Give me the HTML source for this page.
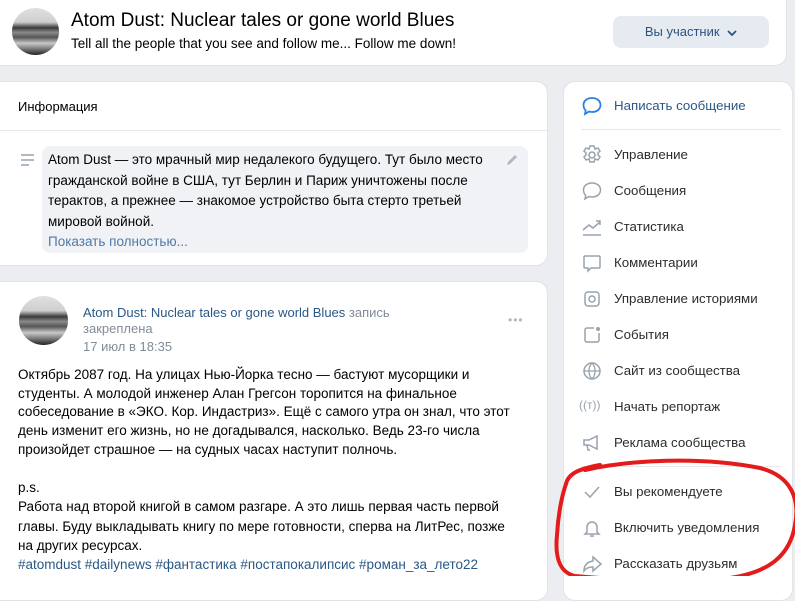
<!DOCTYPE html>
<html><head><meta charset="utf-8"><style>
*{margin:0;padding:0;box-sizing:border-box}
body{width:795px;height:576px;overflow:hidden;background:#ebedf0;font-family:"Liberation Sans","Noto Sans CJK SC",sans-serif;color:#000;position:relative}
.card{position:absolute;background:#fff;border:1px solid #e1e3e6;border-radius:12px}
.av{position:absolute;border-radius:50%;background:linear-gradient(180deg,#e0e0e0 0,#cfcfcf 30%,#3a3a3a 42%,#8a8a8a 52%,#555 62%,#c8c8c8 75%,#222 100%)}
.nowrap{white-space:nowrap}
.mi{position:absolute;left:50px;font-size:13.3px;color:#2c2d2e;white-space:nowrap}
.ic{position:absolute;left:17px;width:22px;height:22px}
</style></head><body>
<div class="card" style="left:-12px;top:-12px;width:799px;height:78px;border-radius:0 0 12px 12px"></div>
<div class="av" style="left:12px;top:8px;width:47px;height:47px"></div>
<div class="nowrap" style="position:absolute;left:71px;top:10px;font-size:19px;color:#000">Atom Dust: Nuclear tales or gone world Blues</div>
<div class="nowrap" style="position:absolute;left:71px;top:36px;font-size:13.5px;color:#000">Tell all the people that you see and follow me... Follow me down!</div>
<div style="position:absolute;left:613px;top:16px;width:156px;height:32px;background:#e5ebf1;border-radius:8px;color:#2c5282;font-size:13px;text-align:center;line-height:32px">Вы участник <svg width="10" height="8" style="margin-left:4px;vertical-align:middle"><path d="M1 2l4 4 4-4" fill="none" stroke="#2c5282" stroke-width="1.8"/></svg></div>

<div class="card" style="left:-12px;top:81px;width:560px;height:185px"></div>
<div style="position:absolute;left:18px;top:99px;font-size:13px">Информация</div>
<div style="position:absolute;left:0;top:130px;width:547px;height:1px;background:#e7e8ec"></div>
<svg style="position:absolute;left:20px;top:153px" width="16" height="14"><path d="M1 2h13M1 7h13M1 12h8" stroke="#99a2ad" stroke-width="1.5"/></svg>
<div style="position:absolute;left:42px;top:146px;width:486px;height:107px;background:#f0f2f5;border-radius:8px"></div>
<div class="nowrap" style="position:absolute;left:48px;top:150px;font-size:13.5px;line-height:20.5px;color:#000">Atom Dust — это мрачный мир недалекого будущего. Тут было место<br>гражданской войне в США, тут Берлин и Париж уничтожены после<br>терактов, а прежнее — знакомое устройство быта стерто третьей<br>мировой войной.<br><span style="color:#4e7aa7">Показать полностью...</span></div>
<svg style="position:absolute;left:505px;top:153px" width="14" height="14"><path d="M2 12l1-3 7-7 2 2-7 7z" fill="#aeb7c2"/></svg>

<div class="card" style="left:-12px;top:281px;width:560px;height:320px"></div>
<div class="av" style="left:19px;top:296px;width:49px;height:49px"></div>
<div class="nowrap" style="position:absolute;left:83px;top:305px;font-size:13px;color:#2a5885">Atom Dust: Nuclear tales or gone world Blues <span style="color:#818c99">запись</span></div>
<div style="position:absolute;left:83px;top:321px;font-size:13px;color:#818c99">закреплена</div>
<div style="position:absolute;left:83px;top:339px;font-size:13px;color:#818c99">17 июл в 18:35</div>
<div style="position:absolute;left:508px;top:313px;font-size:12px;color:#aeb7c2;letter-spacing:1px">•••</div>
<div class="nowrap" style="position:absolute;left:18px;top:366px;font-size:13.5px;line-height:18.7px">Октябрь 2087 год. На улицах Нью-Йорка тесно — бастуют мусорщики и<br>студенты. А молодой инженер Алан Грегсон торопится на финальное<br>собеседование в «ЭКО. Кор. Индастриз». Ещё с самого утра он знал, что этот<br>день изменит его жизнь, но не догадывался, насколько. Ведь 23-го числа<br>произойдет страшное — на судных часах наступит полночь.</div>
<div class="nowrap" style="position:absolute;left:18px;top:478px;font-size:13.5px;line-height:19.3px">p.s.<br>Работа над второй книгой в самом разгаре. А это лишь первая часть первой<br>главы. Буду выкладывать книгу по мере готовности, сперва на ЛитРес, позже<br>на других ресурсах.<br><span style="color:#2a5885">#atomdust #dailynews #фантастика #постапокалипсис #роман_за_лето22</span></div>

<div class="card" style="left:563px;top:81px;width:230px;height:520px">
<svg class="ic" style="top:13px" viewBox="0 0 22 22"><path d="M11 3c5 0 8.5 3 8.5 7s-3.5 7-8.5 7c-1 0-2-.2-3-.5L4 19l.7-3.5C3.3 14 2.5 12 2.5 10 2.5 6 6 3 11 3z" fill="none" stroke="#2d81e0" stroke-width="1.8"/></svg>
<div class="mi" style="top:16px;color:#2a5885">Написать сообщение</div>
<div style="position:absolute;left:17px;top:47px;width:200px;height:1px;background:#e7e8ec"></div>
<svg class="ic" style="top:62px" viewBox="0 0 22 22"><circle cx="11" cy="11" r="3" fill="none" stroke="#99a2ad" stroke-width="1.6"/><path d="M9 2h4l1 3 3-1 2 3-2 2 0 2 2 2-2 3-3-1-1 3H9l-1-3-3 1-2-3 2-2V9L3 7l2-3 3 1z" fill="none" stroke="#99a2ad" stroke-width="1.5"/></svg>
<div class="mi" style="top:65px">Управление</div>
<svg class="ic" style="top:98px" viewBox="0 0 22 22"><path d="M11 3c5 0 8.5 3 8.5 7s-3.5 7-8.5 7c-1 0-2-.2-3-.5L4 19l.7-3.5C3.3 14 2.5 12 2.5 10 2.5 6 6 3 11 3z" fill="none" stroke="#99a2ad" stroke-width="1.5"/></svg>
<div class="mi" style="top:101px">Сообщения</div>
<svg class="ic" style="top:134px" viewBox="0 0 22 22"><path d="M2 14l6-5 4 3 7-6M15 5h4v4M2 19h18" fill="none" stroke="#99a2ad" stroke-width="1.5"/></svg>
<div class="mi" style="top:137px">Статистика</div>
<svg class="ic" style="top:170px" viewBox="0 0 22 22"><path d="M4 4h14a1 1 0 011 1v10a1 1 0 01-1 1H10l-3 3v-3H4a1 1 0 01-1-1V5a1 1 0 011-1z" fill="none" stroke="#99a2ad" stroke-width="1.5"/></svg>
<div class="mi" style="top:173px">Комментарии</div>
<svg class="ic" style="top:206px" viewBox="0 0 22 22"><rect x="4" y="4" width="14" height="14" rx="3" fill="none" stroke="#99a2ad" stroke-width="1.5"/><circle cx="11" cy="11" r="3" fill="none" stroke="#99a2ad" stroke-width="1.5"/></svg>
<div class="mi" style="top:209px">Управление историями</div>
<svg class="ic" style="top:242px" viewBox="0 0 22 22"><path d="M13 4H6a2 2 0 00-2 2v10a2 2 0 002 2h10a2 2 0 002-2V9" fill="none" stroke="#99a2ad" stroke-width="1.5"/><circle cx="17" cy="5" r="2" fill="#99a2ad"/></svg>
<div class="mi" style="top:245px">События</div>
<svg class="ic" style="top:278px" viewBox="0 0 22 22"><circle cx="11" cy="11" r="8" fill="none" stroke="#99a2ad" stroke-width="1.5"/><path d="M3 11h16M11 3c-4 4-4 12 0 16M11 3c4 4 4 12 0 16" fill="none" stroke="#99a2ad" stroke-width="1.3"/></svg>
<div class="mi" style="top:281px">Сайт из сообщества</div>
<div style="position:absolute;left:15px;top:316px;font-size:12px;color:#99a2ad">((т))</div>
<div class="mi" style="top:317px">Начать репортаж</div>
<svg class="ic" style="top:350px" viewBox="0 0 22 22"><path d="M3 8h5l8-4v13l-8-4H3zM6 13l1 5h2" fill="none" stroke="#99a2ad" stroke-width="1.5"/></svg>
<div class="mi" style="top:353px">Реклама сообщества</div>
<div style="position:absolute;left:17px;top:384px;width:200px;height:1px;background:#e7e8ec"></div>
<svg class="ic" style="top:399px" viewBox="0 0 22 22"><path d="M4 11l5 5 9-10" fill="none" stroke="#99a2ad" stroke-width="1.5"/></svg>
<div class="mi" style="top:402px">Вы рекомендуете</div>
<svg class="ic" style="top:435px" viewBox="0 0 22 22"><path d="M6 15V10a5 5 0 0110 0v5l2 2H4zM9 19h4" fill="none" stroke="#99a2ad" stroke-width="1.5"/></svg>
<div class="mi" style="top:438px">Включить уведомления</div>
<svg class="ic" style="top:471px" viewBox="0 0 22 22"><path d="M12 4l8 7-8 7v-4c-4 0-7 1-9 4 0-6 3-9 9-10z" fill="none" stroke="#99a2ad" stroke-width="1.5"/></svg>
<div class="mi" style="top:474px">Рассказать друзьям</div>
</div>

<svg style="position:absolute;left:0;top:0" width="795" height="576"><path d="M585 470C630 460 700 456 760 468C792 476 800 500 795 525C790 555 770 572 730 578C690 584 620 580 575 576C558 572 555 555 557 535C558 515 562 495 566 484C568 474 578 469 600 465" fill="none" stroke="#e31b1b" stroke-width="4" stroke-linecap="round"/></svg>
</body></html>
